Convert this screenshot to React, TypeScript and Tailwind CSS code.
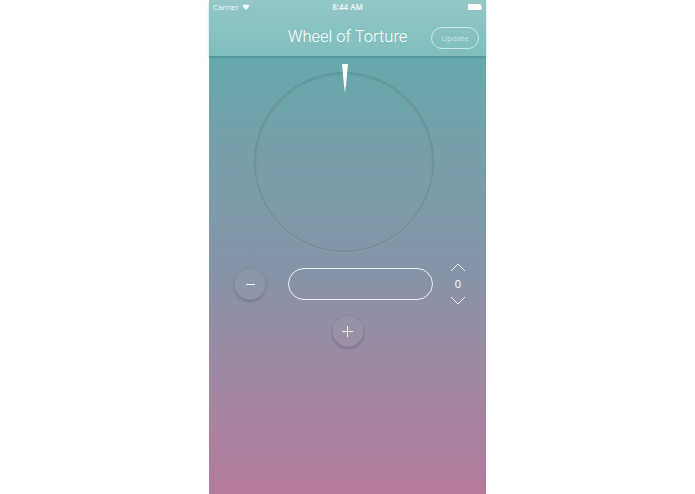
export default function App() {
  return (
    <div className="w-full h-[494px] bg-white flex justify-center overflow-hidden" style={{ fontFamily: '"Open Sans", "Liberation Sans", sans-serif' }}>
      <div className="w-[277px] h-[494px] flex flex-col bg-linear-to-b from-[#5aafac] via-[#8794a7] via-55% to-[#b57a9c]">
        {/* header */}
        <div className="h-[56px] bg-linear-to-b from-[#93c8c7] to-[#7fbebd] shadow-[0_2px_2px_rgba(40,120,115,0.35)] relative z-10 flex flex-col">
          <div className="h-[14px] flex items-center justify-between px-[4px] text-[8px] text-white/90">
            <div className="flex items-center gap-[3px] w-[60px]">
              <span>Carrier</span>
              <svg width="8" height="6" viewBox="0 0 8 6">
                <path d="M4 6 L0.3 2 A5.5 5.5 0 0 1 7.7 2 Z" fill="white" fillOpacity="0.9" />
              </svg>
            </div>
            <span className="font-semibold">8:44 AM</span>
            <div className="w-[60px] flex justify-end">
              <div className="flex items-center">
                <div className="w-[13px] h-[6px] bg-white rounded-[1px]" />
                <div className="w-[1px] h-[3px] bg-white/80" />
              </div>
            </div>
          </div>
          <div className="flex-1 flex items-center justify-center relative pt-[5px]">
            <span className="text-[16.5px] text-white font-light" style={{ fontFamily: 'Roboto, "Liberation Sans", sans-serif' }}>
              Wheel of Torture
            </span>
            <div className="absolute right-[7px] top-[13px] w-[48px] h-[22px] rounded-full border border-white/60 flex items-center justify-center text-[8px] text-white/60">
              Update
            </div>
          </div>
        </div>

        {/* wheel */}
        <div className="flex justify-center mt-[16px] pr-[7px]">
          <div className="relative w-[180px] h-[180px] rounded-full border border-[#2f6f72]/30 shadow-[inset_0_1px_3px_rgba(0,0,0,0.12),0_1px_1px_rgba(255,255,255,0.08)]">
            <svg className="absolute left-[87px] -top-[9px]" width="6" height="29" viewBox="0 0 6 29">
              <defs>
                <linearGradient id="pt" x1="0" y1="0" x2="0" y2="1">
                  <stop offset="0" stopColor="#ffffff" />
                  <stop offset="0.75" stopColor="#ffffff" />
                  <stop offset="1" stopColor="#ffffff" stopOpacity="0.3" />
                </linearGradient>
              </defs>
              <path d="M0 0 L6 0 L3.3 29 L2.7 29 Z" fill="url(#pt)" />
            </svg>
          </div>
        </div>

        {/* controls */}
        <div className="flex items-center mt-[11px] pl-[25px] h-[42px]">
          <div className="w-[32px] h-[32px] rounded-full bg-white/[0.04] border border-black/5 shadow-[0_2px_3px_rgba(60,60,90,0.3)] flex items-center justify-center">
            <div className="w-[9px] h-[1px] bg-white/90" />
          </div>
          <div className="ml-[22px] w-[145px] h-[32px] rounded-full border border-white/85" />
          <div className="ml-[17px] w-[16px] flex flex-col items-center">
            <svg width="16" height="9" viewBox="0 0 16 9">
              <path d="M1 8 L8 1 L15 8" stroke="white" strokeOpacity="0.85" strokeWidth="1" fill="none" />
            </svg>
            <span className="text-[11px] leading-[16px] my-[4px] text-white">0</span>
            <svg width="16" height="9" viewBox="0 0 16 9">
              <path d="M1 1 L8 8 L15 1" stroke="white" strokeOpacity="0.85" strokeWidth="1" fill="none" />
            </svg>
          </div>
        </div>

        <div className="flex justify-center mt-[10px]">
          <div className="w-[32px] h-[32px] rounded-full bg-white/[0.04] border border-black/5 shadow-[0_2px_3px_rgba(60,60,90,0.3)] flex items-center justify-center relative">
            <div className="w-[11px] h-[1px] bg-white/90" />
            <div className="absolute w-[1px] h-[11px] bg-white/90" />
          </div>
        </div>
      </div>
    </div>
  );
}
